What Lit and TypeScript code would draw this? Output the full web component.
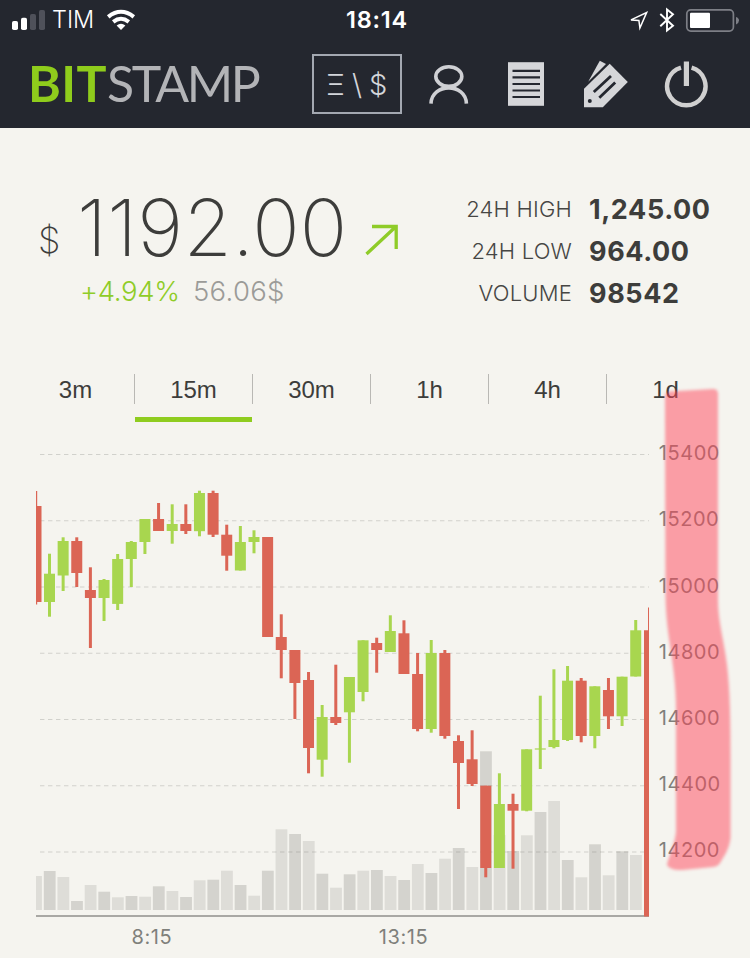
import { LitElement, html, svg, css } from "lit";
import { customElement, property } from "lit/decorators.js";
import { classMap } from "lit/directives/class-map.js";

// high, body top, body bottom, low, rising, volume top
type Candle = [number, number, number, number, 0 | 1, number];

const CANDLES: Candle[] = [
  [553.7, 573.7, 602, 616.7, 1, 871],
  [537.3, 541, 575.5, 591, 1, 877],
  [537.3, 541, 573, 587, 0, 901],
  [567.3, 590, 598, 648, 0, 885],
  [579, 580, 598, 621, 1, 891.7],
  [554, 559, 603.9, 610, 1, 897.3],
  [541, 542, 559, 587, 1, 896],
  [519, 519, 542, 554, 1, 896.7],
  [503, 519, 531, 531, 0, 886.3],
  [504.3, 524, 531, 543.7, 1, 891],
  [504.3, 524, 531, 534, 0, 897],
  [490.7, 493, 531.2, 536.3, 1, 880.3],
  [490.7, 493, 534.7, 537, 0, 879.7],
  [524.7, 534.7, 555.7, 570.7, 0, 870.7],
  [526, 542, 570.5, 570.5, 1, 885],
  [530.3, 537, 542, 553.3, 1, 895.7],
  [537, 537, 637, 637, 0, 870.7],
  [614.3, 637, 650, 678.3, 0, 829.3],
  [650, 650, 683, 719, 0, 834],
  [672, 680, 748, 773.3, 0, 841],
  [705, 717, 759.7, 776.7, 1, 873.7],
  [664.7, 717, 723, 725, 0, 887.7],
  [677, 677, 712.3, 762.7, 1, 874.3],
  [640.3, 640.3, 692, 701.3, 1, 870.7],
  [637.7, 643, 650, 672.7, 0, 870],
  [615.3, 631, 652, 652, 1, 876],
  [620.3, 633.3, 674, 674, 0, 880],
  [653, 674, 729, 731.3, 0, 864],
  [640, 653, 729, 732.7, 1, 873],
  [650, 653, 736, 738.7, 0, 858.7],
  [735.3, 741, 763, 809, 0, 848],
  [730.3, 759.3, 784, 786, 0, 867],
  [785.7, 785.7, 868, 877.3, 0, 751.3],
  [773.3, 804, 868, 868, 1, 835],
  [793.7, 804, 810.7, 868.7, 0, 851],
  [749.3, 749.3, 810.7, 811.3, 1, 835.3],
  [695.7, 748.4, 749.6, 769, 1, 812],
  [669.3, 740, 747, 748.3, 1, 801],
  [666, 680.7, 740, 741, 1, 860],
  [678, 680.7, 736, 742.3, 0, 877.3],
  [686.3, 686.3, 736, 748.3, 1, 844.3],
  [678, 690, 716.3, 729, 0, 875.3],
  [676.7, 676.7, 716.3, 726, 1, 851.3],
  [620, 630.3, 676.5, 676.5, 1, 855],
];

const LEVELS = [15400, 15200, 15000, 14800, 14600, 14400, 14200];
const CHART_TOP = 430;

@customElement("status-bar")
class StatusBar extends LitElement {
  static styles = css`
    :host { display: flex; height: 40px; align-items: center; justify-content: space-between;
      padding: 0 11px 0 12px; box-sizing: border-box; color: #fff; font: 24px/42px Inter, sans-serif; }
    .side { display: flex; align-items: center; width: 300px; height: 40px; }
    .right { justify-content: flex-end; }
    .carrier { width: 54px; padding-left: 7px; font-weight: 300; letter-spacing: 0; font-size: 23.5px; }
    .time { font-weight: 600; font-size: 23.5px; letter-spacing: 0.8px; padding-left: 3px; }
    svg { display: block; }
  `;
  render() {
    return html`
      <div class="side">
        <svg width="33" height="40" viewBox="12 0 33 40">
          <rect x="12" y="21" width="6" height="9" rx="1.8" fill="#fff"></rect>
          <rect x="21" y="17.8" width="6" height="12.2" rx="1.8" fill="#fff"></rect>
          <rect x="30" y="14" width="6" height="16" rx="1.8" fill="#4f515a"></rect>
          <rect x="39" y="10" width="6" height="20" rx="1.8" fill="#4f515a"></rect>
        </svg>
        <span class="carrier">TIM</span>
        <svg width="30" height="40" viewBox="106 0 30 40" fill="none" stroke="#fff" stroke-width="4">
          <path d="M108.2 16.8Q121 6.8 133.8 16.8"></path>
          <path d="M113.2 21.8Q121 15.8 128.8 21.8"></path>
          <path d="M116.6 25.4Q121 22 125.4 25.4L121 30Z" fill="#fff" stroke="none"></path>
        </svg>
      </div>
      <span class="time">18:14</span>
      <div class="side right">
        <svg width="113" height="40" viewBox="626 0 113 40" fill="none">
          <path d="M646.6 12.6L639.9 28L638.9 20.4L631 19.9Z" stroke="#fff" stroke-width="1.5"></path>
          <path d="M660.3 14L673 25.8L667 30.5V9.5L673 14.3L660.3 26.2" stroke="#fff" stroke-width="1.9"></path>
          <rect x="686.8" y="9.9" width="46.6" height="21.2" rx="4" stroke="#7d7f86" stroke-width="1.7"></rect>
          <rect x="690" y="12.8" width="20" height="15.2" rx="1" fill="#fff"></rect>
          <path d="M736 17Q739 18 739 20.5T736 24.5Z" fill="#7d7f86"></path>
        </svg>
      </div>
    `;
  }
}

@customElement("nav-bar")
class NavBar extends LitElement {
  static styles = css`
    :host { display: flex; height: 88px; padding: 0 40px 0 28px; box-sizing: border-box; align-items: center; justify-content: space-between; }
    .logo { font: 400 50px/86px Lato, sans-serif; color: #b3b4b7; white-space: nowrap; width: 240px; height: 88px; }
    .bit { font-weight: 700; color: #8fcc1c; letter-spacing: 0.4px; }
    .stamp { letter-spacing: -2.4px; }
    .actions { display: flex; align-items: center; height: 88px; }
    .pair { display: flex; box-sizing: border-box; width: 90px; height: 60px; border: 2px solid #a3a8b1;
      color: #d3d5da; font: 300 29px/58px Inter, sans-serif; padding-left: 12px; margin-right: 26px; }
    .xi { width: 26px; }
    .slash { width: 17px; }
    svg { display: block; }
  `;
  render() {
    return html`
      <div class="logo"><span class="bit">BIT</span><span class="stamp">STAMP</span></div>
      <div class="actions">
        <div class="pair"><span class="xi">Ξ</span><span class="slash">\\</span><span>$</span></div>
        <svg width="282" height="88" viewBox="428 40 282 88" fill="none">
          <g stroke="#cfd0d4" stroke-width="3.6">
            <ellipse cx="448.8" cy="76.6" rx="13" ry="9.8"></ellipse>
            <path d="M431 103.6C431.5 82.6 466 82.6 466.4 103.6"></path>
          </g>
          <rect x="508" y="62.2" width="36" height="43.6" fill="#d5d6d9"></rect>
          <path d="M512.5 70.8H540M512.5 77.4H540M512.5 84H540M512.5 90.5H540M512.5 97H540" stroke="#24272f" stroke-width="2.2"></path>
          <path d="M609.7 63.8L627.8 82L602.8 107.2H584V88.8Z" fill="#d5d6d9"></path>
          <path d="M599.8 60.8L606 64L588.2 81.8Z" fill="#d5d6d9"></path>
          <path d="M593.8 92L611 76M599.3 97.8L615.2 82.4" stroke="#24272f" stroke-width="2.8"></path>
          <circle cx="589.8" cy="101" r="2" fill="#24272f"></circle>
          <path d="M681 67.6A19.2 19.2 0 1 0 691.6 67.6" stroke="#d0d0d0" stroke-width="4.4"></path>
          <path d="M686.4 61.5V86" stroke="#d0d0d0" stroke-width="5.2"></path>
        </svg>
      </div>
    `;
  }
}

@customElement("price-summary")
class PriceSummary extends LitElement {
  static styles = css`
    :host { display: flex; height: 243px; padding: 61px 40px 0 38px; box-sizing: border-box;
      justify-content: space-between; font-family: Inter, sans-serif; color: #3d3d3b; }
    .row { display: flex; height: 78px; }
    .cur { font: 200 36px/102px Inter, sans-serif; width: 39px; height: 78px; }
    .price { font: 200 78.5px/77px Inter, sans-serif; letter-spacing: 0.3px; width: 286px; white-space: nowrap; }
    .change { display: flex; padding-left: 42px; font: 300 27.5px/49px Inter, sans-serif; }
    .pct { color: #8fcc28; width: 113px; letter-spacing: -0.3px; }
    .abs { color: #9b9b98; letter-spacing: 0.3px; }
    .stats { display: grid; grid-template-columns: 120px 121px; column-gap: 17px; grid-auto-rows: 42px;
      align-content: start; line-height: 42px; white-space: nowrap; }
    .label { font-size: 22px; line-height: 41px; font-weight: 300; text-align: right; letter-spacing: 0.2px; color: #464644; }
    .value { font-size: 27px; font-weight: 700; letter-spacing: 0.6px; }
    svg { display: block; }
  `;
  render() {
    const stats = [["24H HIGH", "1,245.00"], ["24H LOW", "964.00"], ["VOLUME", "98542"]];
    return html`
      <div>
        <div class="row">
          <span class="cur">$</span><span class="price">1192.00</span>
          <svg width="38" height="78" viewBox="363 189 38 78" fill="none" stroke="#8fcc28" stroke-width="3.3">
            <path d="M366.5 254L396 226.5M372 226.5H396.2V249"></path>
          </svg>
        </div>
        <div class="change"><span class="pct">+4.94%</span><span class="abs">56.06$</span></div>
      </div>
      <div class="stats">
        ${stats.map(([k, v]) => html`<span class="label">${k}</span><span class="value">${v}</span>`)}
      </div>
    `;
  }
}

@customElement("interval-tabs")
class IntervalTabs extends LitElement {
  @property() active = "15m";
  static styles = css`
    :host { display: flex; height: 59px; padding: 3px 24px 0 17px; box-sizing: border-box; }
    .tab { width: 118px; height: 49px; box-sizing: border-box; text-align: center; color: #3d3d3b;
      font: 24px/32px "Liberation Sans", Arial, sans-serif; }
    .name { display: block; height: 30px; border-right: 1px solid #b9b8b4; }
    .tab:last-child .name { border-color: transparent; }
    .active::after { content: ""; display: block; height: 5px; width: 117px; margin-top: 13px; background: #8fcc1f; }
  `;
  render() {
    return ["3m", "15m", "30m", "1h", "4h", "1d"].map(
      (t) => html`<div class=${classMap({ tab: true, active: t === this.active })}><span class="name">${t}</span></div>`,
    );
  }
}

@customElement("candle-chart")
class CandleChart extends LitElement {
  static styles = css`
    :host { display: block; height: 528px; }
    svg { display: block; }
    .vol { fill: #deddd8; }
    .vol.dark { fill: #d4d3ce; }
    .up { fill: #a8d64f; }
    .down { fill: #db6555; }
    .grid { stroke: #6e6e6a; stroke-opacity: 0.26; stroke-width: 1.2; stroke-dasharray: 4.4 3.6; }
    .axis { stroke: #a9a8a4; stroke-width: 2; }
    .tick { font: 20px Inter, sans-serif; fill: #7f807b; letter-spacing: 0.55px; }
  `;
  render() {
    const cx = (i: number) => 49.5 + 13.633 * i;
    return html`
      <svg width="750" height="528" viewBox="0 ${CHART_TOP} 750 528">
        <rect class="vol" x="36" y="876" width="5.9" height="34"></rect>
        ${CANDLES.map((c, i) => svg`<rect class=${i % 2 ? "vol" : "vol dark"} x=${cx(i) - 5.7} y=${c[5]} width="11.8" height=${910 - c[5]}></rect>`)}
        ${LEVELS.map((_, i) => svg`<line class="grid" x1="40" x2="649" y1=${454.5 + 66.25 * i} y2=${454.5 + 66.25 * i}></line>`)}
        <line class="axis" x1="36" x2="649" y1="916" y2="916"></line>
        <path class="down" d="M36 491h1.2V506H41.5V602H37.2V604.5H36Z"></path>
        ${CANDLES.map((c, i) => svg`<g class=${c[4] ? "up" : "down"}>
          <rect x=${cx(i) - 1.5} y=${c[0]} width="3" height=${c[3] - c[0]}></rect>
          <rect x=${cx(i) - 5.5} y=${c[1]} width="11" height=${c[2] - c[1]}></rect></g>`)}
        <path class="down" d="M644 630.3H648V607.5H649V916.5H644Z"></path>
        ${LEVELS.map((n, i) => svg`<text class="tick" x="658.8" y=${460.2 + 66.2 * i}>${n}</text>`)}
        <text class="tick" x="131.5" y="944.2">8:15</text>
        <text class="tick" x="378.8" y="944.2">13:15</text>
      </svg>
    `;
  }
}

@customElement("marker-stroke")
class MarkerStroke extends LitElement {
  static styles = css`
    :host { position: absolute; left: 650px; top: 375px; pointer-events: none; }
    svg { display: block; }
    .soft { filter: blur(1.4px); }
  `;
  render() {
    return html`
      <svg width="100" height="510" viewBox="650 375 100 510">
        <path class="soft" fill="#ff4457" fill-opacity="0.49"
          d="M665 396Q665 392 670 391.5L713 389Q718 389 718 394V600C718 622 724 640 727 665C730 690 730.5 720 730.5 760V838C729 850 724 856 720 863Q718 866.5 713 867L682 870Q670 870.5 667 865C668 858 674 848 676 832V710C676 685 673 665 670 645C667 625 665.5 610 665.5 590Z"></path>
      </svg>
    `;
  }
}

@customElement("app-root")
class AppRoot extends LitElement {
  static styles = css`
    :host { display: block; position: relative; width: 750px; height: 958px; overflow: hidden; background: #f5f4ef; }
    .header { background: #24272f; height: 128px; }
  `;
  render() {
    return html`
      <div class="header"><status-bar></status-bar><nav-bar></nav-bar></div>
      <price-summary></price-summary>
      <interval-tabs></interval-tabs>
      <candle-chart></candle-chart>
      <marker-stroke></marker-stroke>
    `;
  }
}
